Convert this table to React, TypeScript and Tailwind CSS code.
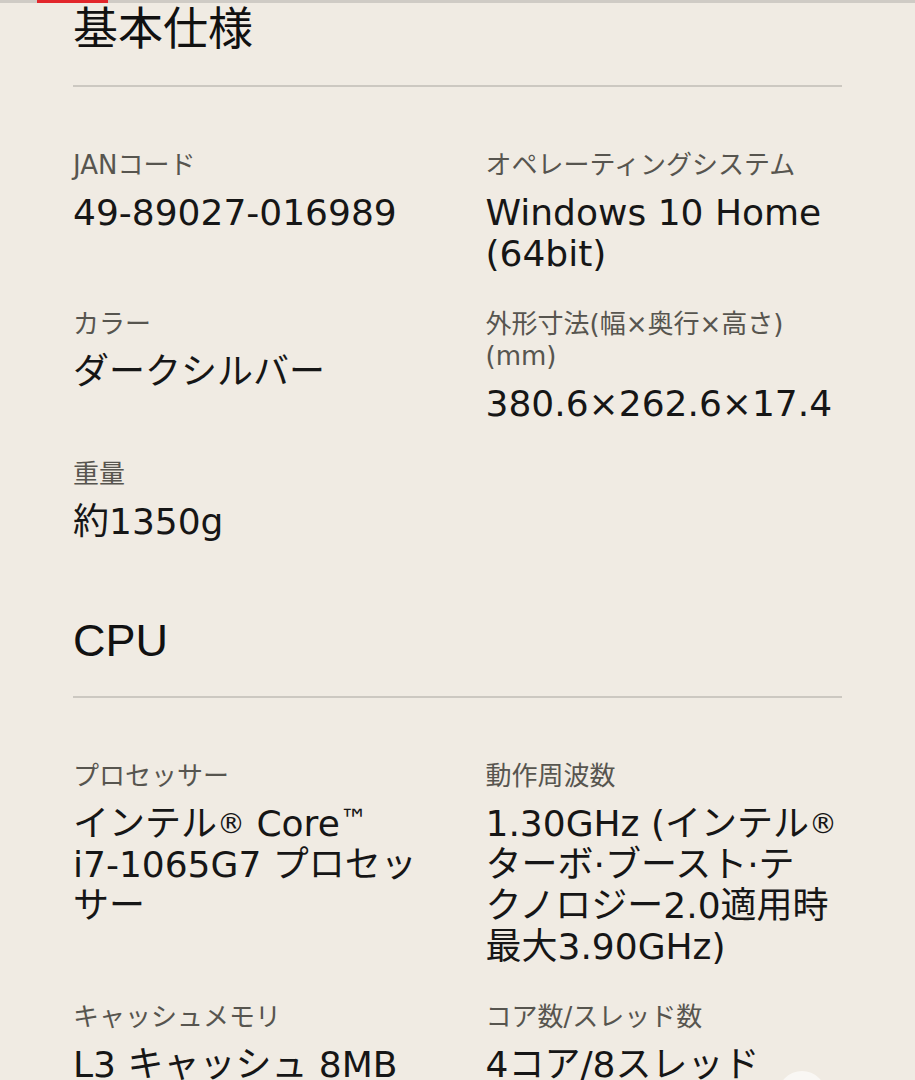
import React from 'react'

type Spec = { label: string[]; value: string[] }
type Section = { title: string; items: Spec[] }

const sections: Section[] = [
    {
        title: '基本仕様',
        items: [
            { label: ['JANコード'], value: ['49-89027-016989'] },
            { label: ['オペレーティングシステム'], value: ['Windows 10 Home', '(64bit)'] },
            { label: ['カラー'], value: ['ダークシルバー'] },
            { label: ['外形寸法(幅×奥行×高さ)', '(mm)'], value: ['380.6×262.6×17.4'] },
            { label: ['重量'], value: ['約1350g'] },
        ],
    },
    {
        title: 'CPU',
        items: [
            { label: ['プロセッサー'], value: ['インテル® Core™', 'i7-1065G7 プロセッ', 'サー'] },
            {
                label: ['動作周波数'],
                value: ['1.30GHz (インテル®', 'ターボ·ブースト·テ', 'クノロジー2.0適用時', '最大3.90GHz)'],
            },
            { label: ['キャッシュメモリ'], value: ['L3 キャッシュ 8MB'] },
            { label: ['コア数/スレッド数'], value: ['4コア/8スレッド'] },
        ],
    },
]

// shrink the ® / ™ marks like the original typeface does
function Line({ text }: { text: string }) {
    const parts = text.split(/([®™])/)
    return (
        <span className="block whitespace-nowrap">
            {parts.map((p, i) =>
                p === '®' ? (
                    <span key={i} className="text-[28px] leading-none align-[3px]">®</span>
                ) : p === '™' ? (
                    <span key={i} className="text-[28px] leading-none align-[7px]">™</span>
                ) : (
                    <React.Fragment key={i}>{p}</React.Fragment>
                )
            )}
        </span>
    )
}

function SpecItem({ spec }: { spec: Spec }) {
    return (
        <div className="flex flex-col">
            <div className="text-[26px] leading-[32px] text-[#57554f]">
                {spec.label.map((l) => (
                    <span key={l} className="block whitespace-nowrap">{l}</span>
                ))}
            </div>
            <div className="mt-[11px] text-[36px] leading-[41px] text-[#161616]">
                {spec.value.map((v) => (
                    <Line key={v} text={v} />
                ))}
            </div>
        </div>
    )
}

export default function App() {
    return (
        <div className="relative h-[1080px] w-full overflow-hidden bg-[#f0ebe3] font-['DejaVu_Sans','Noto_Sans_CJK_JP',sans-serif]">
            {/* scroll progress */}
            <div className="flex h-[3px] bg-[#cfcbc5]">
                <div className="w-[37px]" />
                <div className="w-[71px] bg-[#e2262b]" />
            </div>

            <div className="px-[73px]">
                {sections.map((section, i) => (
                    <section key={section.title} className={i === 0 ? 'pt-px' : 'mt-[73px]'}>
                        <h2 className="text-[45px] leading-[52px] text-[#111] font-['Liberation_Sans','Noto_Sans_CJK_JP',sans-serif]">
                            {section.title}
                        </h2>
                        <div className="mt-[29px] h-[2px] bg-[#ccc8c1]" />
                        <div className="grid grid-cols-2 gap-x-14 gap-y-[34px] pt-[62px]">
                            {section.items.map((item) => (
                                <SpecItem key={item.label[0]} spec={item} />
                            ))}
                        </div>
                    </section>
                ))}
            </div>

            {/* floating button peeking at the bottom */}
            <div className="absolute left-[778px] top-[1071px] h-[48px] w-[48px] rounded-full bg-white/60" />
        </div>
    )
}
